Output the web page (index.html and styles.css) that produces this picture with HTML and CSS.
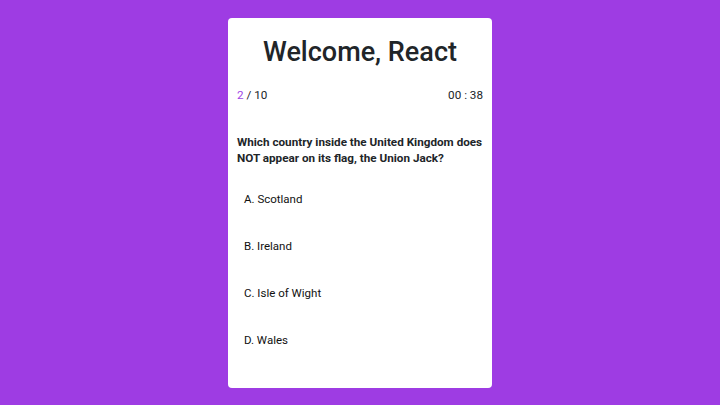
FILE: index.html
```html
<!DOCTYPE html>
<html>
<head>
<meta charset="utf-8">
<link rel="stylesheet" href="styles.css">
</head>
<body>
<div class="card">
  <h1 class="title">Welcome, React</h1>
  <div class="meta">
    <div class="count"><span class="current">2</span> / 10</div>
    <div class="timer">00 : 38</div>
  </div>
  <p class="question">Which country inside the United Kingdom does NOT appear on its flag, the Union Jack?</p>
  <ul class="options">
    <li class="option">A. Scotland</li>
    <li class="option">B. Ireland</li>
    <li class="option">C. Isle of Wight</li>
    <li class="option">D. Wales</li>
  </ul>
</div>
</body>
</html>
```
FILE: styles.css
```css
html, body {
  margin: 0;
  padding: 0;
}
body {
  background: #9e3ce3;
  font-family: Roboto, "Liberation Sans", sans-serif;
  color: #212529;
  height: 405px;
  display: flex;
  justify-content: center;
  align-items: flex-start;
}
.card {
  margin-top: 18px;
  width: 264px;
  height: 370px;
  box-sizing: border-box;
  background: #fff;
  border-radius: 4px;
  padding: 17px 9px 0;
}
.title {
  margin: 0;
  font-size: 27px;
  font-weight: 500;
  line-height: 34px;
  text-align: center;
}
.meta {
  margin-top: 18px;
  display: flex;
  justify-content: space-between;
  font-size: 11.7px;
  line-height: 16px;
}
.current {
  color: #a046e6;
}
.question {
  margin: 31px 0 0;
  font-size: 11.7px;
  font-weight: 700;
  line-height: 16px;
}
.options {
  list-style: none;
  margin: 10px 0 0;
  padding: 0;
}
.option {
  height: 47px;
  line-height: 47px;
  padding-left: 7px;
  font-size: 11.5px;
  color: #111;
}
```
